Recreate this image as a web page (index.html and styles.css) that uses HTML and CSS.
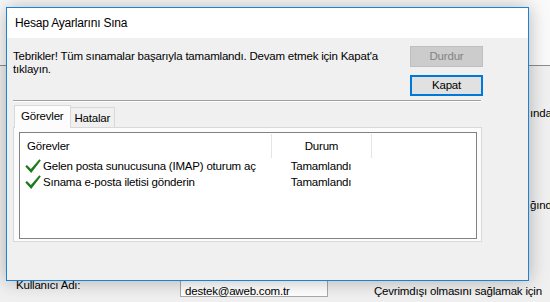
FILE: index.html
```html
<html>
<head>
<meta charset="utf-8">
<link rel="stylesheet" href="styles.css">
</head>
<body>

<div class="backdrop">
	<div class="bgHead"></div>
	<div class="bgBody">
		<div class="bgNote firstNote">ında</div>
		<div class="bgNote secondNote">ğında</div>
		<div class="bgRow">
			<div class="bgLabel">Kullanıcı Adı:</div>
			<div class="bgInput">destek@aweb.com.tr</div>
			<div class="bgHint">Çevrimdışı olmasını sağlamak için</div>
		</div>
	</div>
</div>

<div class="dialog">
	<div class="titleBar">Hesap Ayarlarını Sına</div>
	<div class="dialogBody">
		<div class="topRow">
			<div class="message">Tebrikler! Tüm sınamalar başarıyla tamamlandı. Devam etmek için Kapat'a tıklayın.</div>
			<div class="buttons">
				<div class="btn disabled">Durdur</div>
				<div class="btn default">Kapat</div>
			</div>
		</div>
		<div class="separator"></div>
		<div class="tabStrip">
			<div class="tab active">Görevler</div>
			<div class="tab">Hatalar</div>
		</div>
		<div class="tabPage">
			<div class="listBox">
				<div class="listHead">
					<div class="colTask">Görevler</div>
					<div class="colState">Durum</div>
					<div class="colRest"></div>
				</div>
				<div class="listRow">
					<div class="colTask">
						<svg class="check" width="16" height="15" viewBox="0 0 16 15"><path d="M0.3 7.6 L1.9 6.1 L5.9 10.1 L14.4 0.2 L15.8 1.5 L6.2 13.9 Z" fill="#1d7a1d"/></svg>
						<span>Gelen posta sunucusuna (IMAP) oturum aç</span>
					</div>
					<div class="colState">Tamamlandı</div>
				</div>
				<div class="listRow">
					<div class="colTask">
						<svg class="check" width="16" height="15" viewBox="0 0 16 15"><path d="M0.3 7.6 L1.9 6.1 L5.9 10.1 L14.4 0.2 L15.8 1.5 L6.2 13.9 Z" fill="#1d7a1d"/></svg>
						<span>Sınama e-posta iletisi gönderin</span>
					</div>
					<div class="colState">Tamamlandı</div>
				</div>
			</div>
		</div>
	</div>
</div>

</body>
</html>
```

FILE: styles.css
```css
body {
	margin: 0;
	width: 550px;
	height: 302px;
	overflow: hidden;
	position: relative;
	background-color: #f0f0f0;
	font-family: "Segoe UI", "Liberation Sans", sans-serif;
	font-size: 11.5px;
	letter-spacing: -0.2px;
	color: #000;
}

.backdrop {
	height: 302px;
}

.bgHead {
	height: 65px;
	background-color: #fafafa;
	border-bottom: 1px solid #8c8c8c;
}

.bgNote {
	padding-left: 530px;
	line-height: 16px;
	white-space: nowrap;
}

.firstNote {
	margin-top: 39px;
}

.secondNote {
	margin-top: 76px;
}

.bgRow {
	display: flex;
	align-items: flex-start;
	margin-top: 66px;
	padding-left: 16px;
	white-space: nowrap;
}

.bgLabel {
	width: 164px;
}

.bgInput {
	width: 142px;
	height: 16px;
	padding-left: 4px;
	line-height: 22px;
	background-color: #fff;
	border: 1px solid #a9a9a9;
}

.bgHint {
	margin-left: 46px;
	padding-top: 6px;
}

.dialog {
	position: absolute;
	left: 6px;
	top: 7px;
	width: 521px;
	height: 272px;
	border: 1px solid #1883d7;
	background-color: #f0f0f0;
	box-shadow: 0 0 18px rgba(0, 0, 0, 0.28);
	display: flex;
	flex-direction: column;
}

.titleBar {
	height: 30px;
	line-height: 31px;
	padding-left: 8px;
	background-color: #fff;
	font-size: 12px;
}

.dialogBody {
	padding: 8px 45px 0 6px;
}

.topRow {
	display: flex;
	justify-content: space-between;
}

.message {
	width: 392px;
	margin-top: 4px;
	line-height: 13px;
}

.buttons {
	display: flex;
	flex-direction: column;
	gap: 8px;
}

.btn {
	width: 71px;
	height: 19px;
	line-height: 19px;
	text-align: center;
	border: 1px solid #adadad;
	background-color: #e1e1e1;
}

.btn.disabled {
	color: #838383;
	background-color: #cccccc;
	border-color: #bfbfbf;
}

.btn.default {
	width: 69px;
	height: 17px;
	line-height: 17px;
	border: 2px solid #0078d7;
}

.separator {
	width: 468px;
	margin-top: 4px;
	border-top: 1px solid #a0a0a0;
	border-bottom: 1px solid #fff;
}

.tabStrip {
	display: flex;
	align-items: flex-end;
	margin-top: 3px;
	padding-left: 1px;
	position: relative;
	z-index: 1;
}

.tab {
	height: 19px;
	line-height: 20px;
	padding: 0 4px;
	background-color: #f0f0f0;
	border: 1px solid #d9d9d9;
	border-bottom: none;
}

.tab.active {
	height: 22px;
	line-height: 21px;
	padding: 0 6px;
	background-color: #fcfcfc;
	margin-bottom: -1px;
}

.tab + .tab {
	border-left: none;
}

.tabPage {
	width: 458px;
	padding: 4px 4px 2px 5px;
	background-color: #fcfcfc;
	border: 1px solid #d9d9d9;
}

.listBox {
	height: 105px;
	background-color: #fff;
	border: 1px solid #828282;
}

.listHead {
	display: flex;
	height: 24px;
	line-height: 24px;
	margin-top: 1px;
}

.listHead .colState,
.listHead .colRest {
	border-left: 1px solid #e5e5e5;
}

.colTask {
	width: 251px;
	display: flex;
	align-items: center;
	white-space: nowrap;
	overflow: hidden;
}

.listHead .colTask {
	padding-left: 7px;
	width: 244px;
}

.colState {
	width: 99px;
	text-align: center;
}

.listRow {
	display: flex;
	height: 16px;
	line-height: 16px;
}

.listRow:first-of-type {
	margin-top: 2px;
}

.listRow .colTask {
	padding-left: 5px;
	width: 246px;
}

.listRow .colState {
	width: 100px;
}

.check {
	margin-right: 2px;
	flex: none;
}
```
